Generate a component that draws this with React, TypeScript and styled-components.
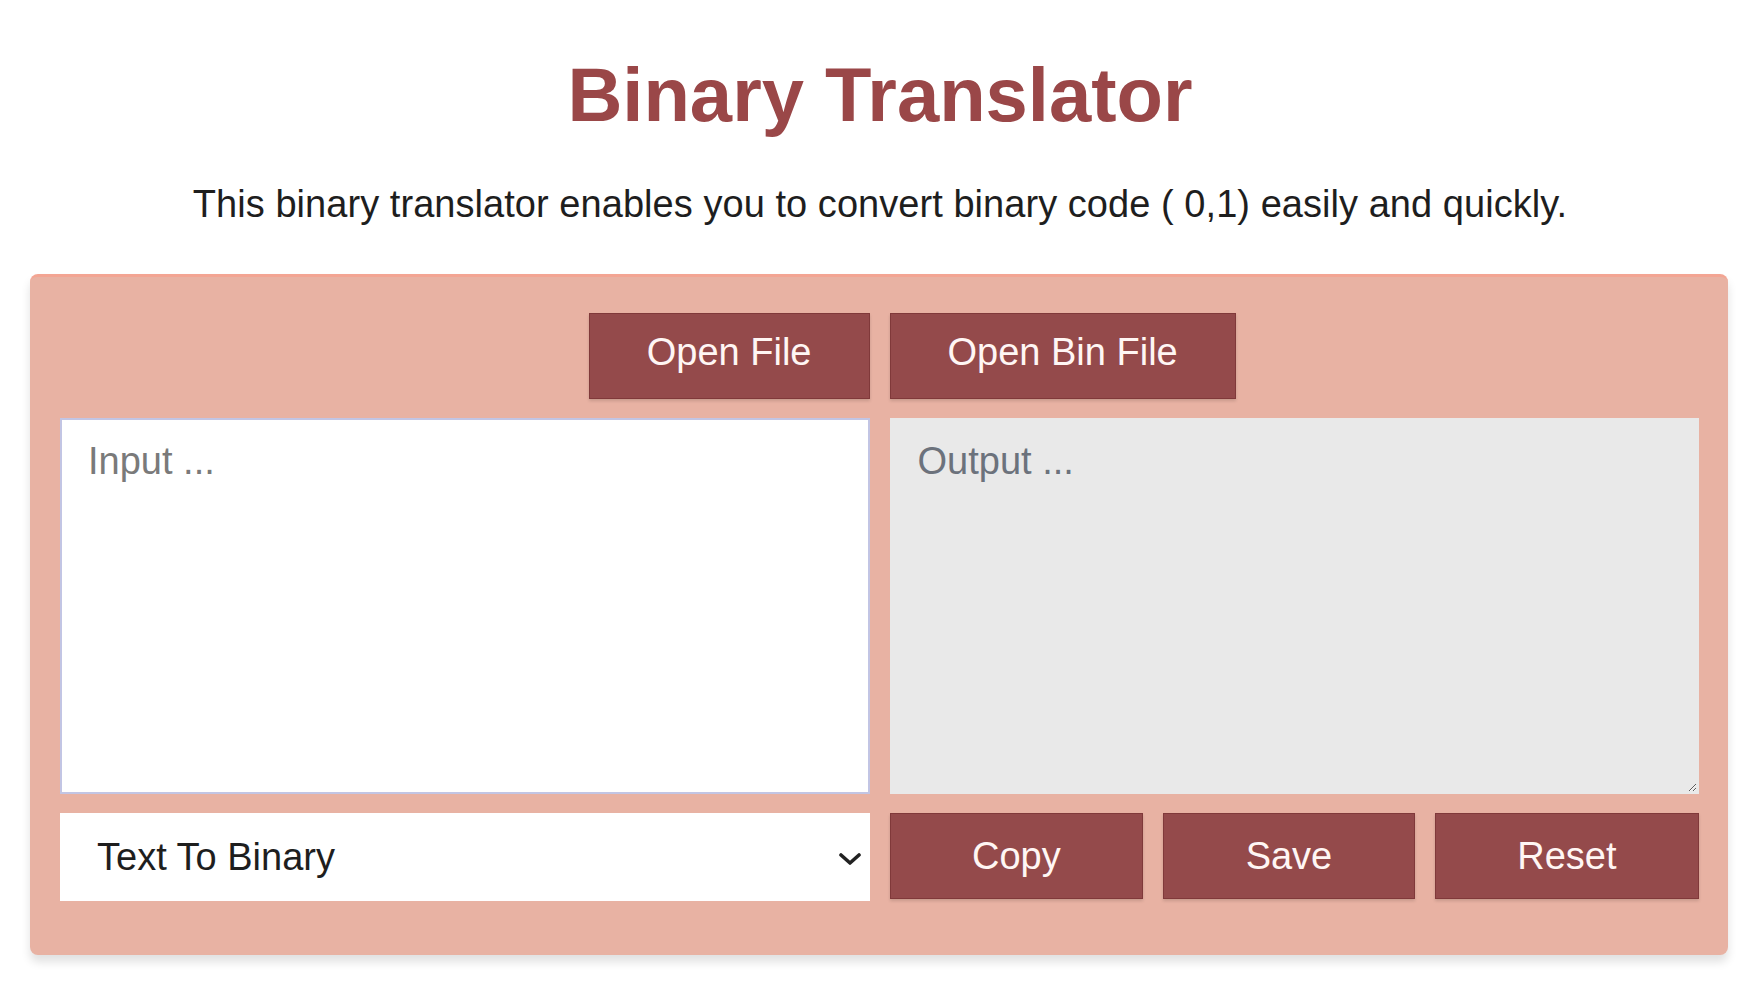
import { useState } from 'react';
import styled, { createGlobalStyle } from 'styled-components';

const GlobalStyle = createGlobalStyle`
  html, body {
    margin: 0;
    padding: 0;
    background: #ffffff;
  }
  body {
    font-family: 'Liberation Sans', Helvetica, Arial, sans-serif;
  }
  * {
    box-sizing: border-box;
  }
`;

const Page = styled.main`
  width: 1760px;
  min-height: 990px;
  padding-top: 51px;
`;

const Title = styled.h1`
  margin: 0;
  text-align: center;
  font-size: 76px;
  font-weight: 700;
  line-height: 1.15;
  color: #9a4748;
`;

const Subtitle = styled.p`
  margin: 45px 0 0;
  text-align: center;
  font-size: 38px;
  letter-spacing: 0.05px;
  line-height: 1.15;
  color: #1e1e1e;
`;

const Panel = styled.section`
  margin: 47px 32px 0 30px;
  padding: 36px 29px 54px 30px;
  background: #e8b2a3;
  border-top: 3px solid #f3a593;
  border-radius: 8px;
  box-shadow: 0 7px 10px rgba(0, 0, 0, 0.12);
  display: grid;
  grid-template-columns: 1fr 1fr;
  column-gap: 20px;
  row-gap: 19px;
`;

const Button = styled.button<{ $align?: 'start' | 'end' | 'stretch'; $lift?: boolean }>`
  justify-self: ${({ $align }) => $align ?? 'stretch'};
  height: 86px;
  padding: 0 57px ${({ $lift }) => ($lift ? '8px' : '0')};
  border: 1px solid #80393a;
  background: #944a4b;
  color: #fff6f4;
  font-family: inherit;
  font-size: 38px;
  cursor: pointer;
  box-shadow: 0 2px 3px rgba(0, 0, 0, 0.14);
`;

const ActionButton = styled(Button)`
  flex: 1 1 auto;
  padding: 0 20px;
`;

const TextArea = styled.textarea<{ $readOnly?: boolean }>`
  display: block;
  width: 100%;
  height: 376px;
  margin: 0;
  padding: 20px 26px 18px;
  font-family: inherit;
  font-size: 38px;
  color: #222;
  caret-color: #222;
  background: ${({ $readOnly }) => ($readOnly ? '#e9e9e9' : '#ffffff')};
  border: 2px solid ${({ $readOnly }) => ($readOnly ? '#e9e9e9' : '#c2c5e4')};
  border-radius: 0;
  outline: none;
  resize: ${({ $readOnly }) => ($readOnly ? 'both' : 'none')};

  &::placeholder {
    color: ${({ $readOnly }) => ($readOnly ? '#6c727c' : '#7a7a7a')};
  }
`;

const SelectWrap = styled.div`
  position: relative;
  height: 88px;
`;

const Select = styled.select`
  width: 100%;
  height: 100%;
  padding: 0 60px 0 37px;
  border: none;
  border-radius: 0;
  background: #ffffff;
  appearance: none;
  font-family: inherit;
  font-size: 38px;
  color: #1e1e1e;
  outline: none;
`;

const Chevron = styled.svg`
  position: absolute;
  right: 9px;
  top: 40px;
  pointer-events: none;
`;

const Actions = styled.div`
  display: flex;
  gap: 20px;
  align-self: start;
`;

export default function App() {
  const [input, setInput] = useState('');
  const [mode, setMode] = useState('text');

  return (
    <Page>
      <GlobalStyle />
      <Title>Binary Translator</Title>
      <Subtitle>
        This binary translator enables you to convert binary code ( 0,1) easily and quickly.
      </Subtitle>
      <Panel>
        <Button $align="end" $lift>Open File</Button>
        <Button $align="start" $lift>Open Bin File</Button>

        <TextArea
          autoFocus
          placeholder="Input ..."
          value={input}
          onChange={(e) => setInput(e.target.value)}
        />
        <TextArea $readOnly readOnly placeholder="Output ..." />

        <SelectWrap>
          <Select value={mode} onChange={(e) => setMode(e.target.value)}>
            <option value="text">Text To Binary</option>
            <option value="binary">Binary To Text</option>
          </Select>
          <Chevron width="22" height="13" viewBox="0 0 22 13">
            <polyline
              points="2,2 11,10 20,2"
              fill="none"
              stroke="#222"
              strokeWidth="3.6"
              strokeLinecap="round"
              strokeLinejoin="round"
            />
          </Chevron>
        </SelectWrap>
        <Actions>
          <ActionButton>Copy</ActionButton>
          <ActionButton>Save</ActionButton>
          <ActionButton>Reset</ActionButton>
        </Actions>
      </Panel>
    </Page>
  );
}
